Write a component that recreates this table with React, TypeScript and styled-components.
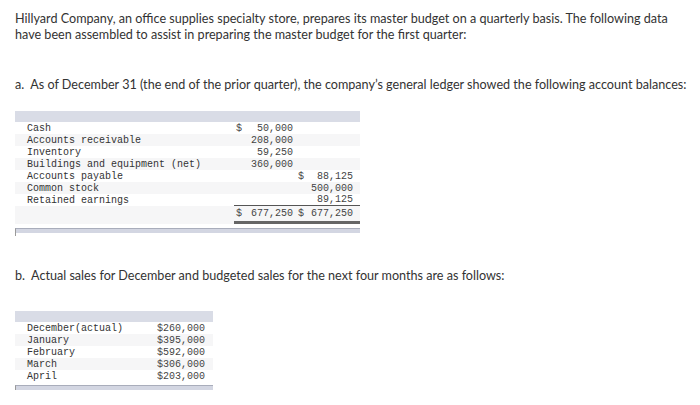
import React from "react";
import styled, { createGlobalStyle } from "styled-components";

const Global = createGlobalStyle`
  body {
    margin: 0;
    background: #fff;
  }
`;

const Page = styled.div`
  padding: 11px 15px 0 15px;
  font-family: Lato, "Liberation Sans", sans-serif;
  color: #333;
`;

const Para = styled.p<{ $top?: number }>`
  margin: ${(p) => p.$top ?? 0}px 0 0 0;
  font-size: 12.6px;
  line-height: 16px;
  width: 680px;
`;

const Sheet = styled.div<{ $width: number; $top: number }>`
  width: ${(p) => p.$width}px;
  margin-top: ${(p) => p.$top}px;
`;

const HeadBar = styled.div`
  height: 11px;
  background: #d9dce6;
`;

const FootBar = styled.div<{ $top: number }>`
  margin-top: ${(p) => p.$top}px;
  height: 4px;
  background: #d3d6e2;
  border-top: 1px solid #a9adbb;
  border-left: 1px solid #9a9a9a;
  &::after {
    content: "";
    display: block;
    width: 1px;
    height: 3px;
    margin: 4px 0 0 -1px;
    background: #9a9a9a;
  }
`;

const Row = styled.div<{ $cols: string; $shade?: boolean; $h?: number }>`
  display: grid;
  grid-template-columns: ${(p) => p.$cols};
  height: ${(p) => p.$h ?? 12}px;
  align-items: center;
  background: ${(p) => (p.$shade ? "#f6f6f7" : "#fff")};
`;

const Label = styled.div`
  padding-left: 12px;
  font-family: "Liberation Mono", monospace;
  font-size: 10px;
  color: #333;
  white-space: pre;
`;

const Num = styled.div<{ $line?: "thin" | "thick"; $pr?: number }>`
  display: flex;
  justify-content: space-between;
  align-items: center;
  align-self: stretch;
  padding: 0 ${(p) => p.$pr ?? 3}px 0 2px;
  font-family: "Liberation Mono", monospace;
  font-size: 10px;
  color: #444;
  white-space: pre;
  border-bottom: ${(p) =>
    p.$line === "thin" ? "1px solid #555" : p.$line === "thick" ? "3px solid #666" : "none"};
`;

type Entry = { label: string; debit?: string; credit?: string; dd?: boolean; cd?: boolean };

const ledger: Entry[] = [
  { label: "Cash", debit: "50,000", dd: true },
  { label: "Accounts receivable", debit: "208,000" },
  { label: "Inventory", debit: "59,250" },
  { label: "Buildings and equipment (net)", debit: "360,000" },
  { label: "Accounts payable", credit: "88,125", cd: true },
  { label: "Common stock", credit: "500,000" },
  { label: "Retained earnings", credit: "89,125" },
];

const sales = [
  ["December(actual)", "$260,000"],
  ["January", "$395,000"],
  ["February", "$592,000"],
  ["March", "$306,000"],
  ["April", "$203,000"],
];

const LEDGER_COLS = "219px 62px 64px";
const SALES_COLS = "135px 63px";

const Money: React.FC<{ value?: string; dollar?: boolean; line?: "thin" | "thick"; pr?: number }> = ({
  value,
  dollar,
  line,
  pr,
}) => (
  <Num $line={line} $pr={pr}>
    <span>{dollar ? "$" : ""}</span>
    <span>{value ?? ""}</span>
  </Num>
);

const App: React.FC = () => {
  return (
    <Page>
      <Global />
      <Para>
        Hillyard Company, an office supplies specialty store, prepares its master budget on a quarterly basis. The
        following data have been assembled to assist in preparing the master budget for the first quarter:
      </Para>
      <Para $top={34}>
        a.&nbsp; As of December 31 (the end of the prior quarter), the company’s general ledger showed the following
        account balances:
      </Para>

      <Sheet $width={345} $top={18}>
        <HeadBar />
        {ledger.map((e, i) => {
          const last = i === ledger.length - 1;
          return (
            <Row key={e.label} $cols={LEDGER_COLS} $shade={i % 2 === 1}>
              <Label>{e.label}</Label>
              <Money value={e.debit} dollar={e.dd} line={last ? "thin" : undefined} />
              <Money value={e.credit} dollar={e.cd} line={last ? "thin" : undefined} pr={7} />
            </Row>
          );
        })}
        <Row $cols={LEDGER_COLS} $shade $h={18}>
          <Label />
          <Money value="677,250" dollar line="thick" />
          <Money value="677,250" dollar line="thick" pr={7} />
        </Row>
        <FootBar $top={4} />
      </Sheet>

      <Para $top={35}>b.&nbsp; Actual sales for December and budgeted sales for the next four months are as follows:</Para>

      <Sheet $width={198} $top={27}>
        <HeadBar />
        {sales.map(([m, v], i) => (
          <Row key={m} $cols={SALES_COLS} $shade={i % 2 === 1}>
            <Label>{m}</Label>
            <Money value={v} pr={8} />
          </Row>
        ))}
        <FootBar $top={3} />
      </Sheet>
    </Page>
  );
};

export default App;
